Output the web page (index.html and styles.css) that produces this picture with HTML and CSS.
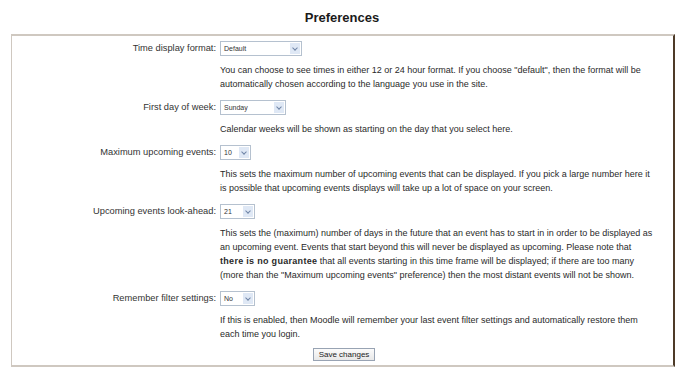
FILE: index.html
```html
<!DOCTYPE html>
<html>
<head>
<meta charset="utf-8">
<link rel="stylesheet" href="styles.css">
</head>
<body>
<h2 class="title">Preferences</h2>
<form class="box">
  <div class="row">
    <div class="label">Time display format:</div>
    <div class="field">
      <div class="select w80"><span>Default</span><i class="arrow"></i></div>
      <div class="desc">You can choose to see times in either 12 or 24 hour format. If you choose "default", then the format will be<br>automatically chosen according to the language you use in the site.</div>
    </div>
  </div>
  <div class="row">
    <div class="label">First day of week:</div>
    <div class="field">
      <div class="select w64"><span>Sunday</span><i class="arrow"></i></div>
      <div class="desc">Calendar weeks will be shown as starting on the day that you select here.</div>
    </div>
  </div>
  <div class="row">
    <div class="label">Maximum upcoming events:</div>
    <div class="field">
      <div class="select w29"><span>10</span><i class="arrow"></i></div>
      <div class="desc">This sets the maximum number of upcoming events that can be displayed. If you pick a large number here it<br>is possible that upcoming events displays will take up a lot of space on your screen.</div>
    </div>
  </div>
  <div class="row">
    <div class="label">Upcoming events look-ahead:</div>
    <div class="field">
      <div class="select w33"><span>21</span><i class="arrow"></i></div>
      <div class="desc">This sets the (maximum) number of days in the future that an event has to start in in order to be displayed as<br>an upcoming event. Events that start beyond this will never be displayed as upcoming. Please note that<br><b>there is no guarantee</b> that all events starting in this time frame will be displayed; if there are too many<br>(more than the "Maximum upcoming events" preference) then the most distant events will not be shown.</div>
    </div>
  </div>
  <div class="row">
    <div class="label">Remember filter settings:</div>
    <div class="field">
      <div class="select w33"><span>No</span><i class="arrow"></i></div>
      <div class="desc">If this is enabled, then Moodle will remember your last event filter settings and automatically restore them<br>each time you login.</div>
    </div>
  </div>
  <div class="actions">
    <button type="button" class="btn">Save changes</button>
  </div>
</form>
</body>
</html>
```
FILE: styles.css
```css
html, body {
  margin: 0;
  padding: 0;
  background: #fff;
}
body {
  font-family: "Liberation Sans", Arial, sans-serif;
  color: #2a2a2a;
  font-size: 9px;
}
.title {
  margin: 0;
  padding-top: 10px;
  height: 24px;
  line-height: 15px;
  font-size: 13px;
  font-weight: bold;
  text-align: center;
  color: #1a1a1a;
}
.box {
  margin: 0 9px 0 11px;
  border: 1px solid #cfc8c0;
  border-top-width: 2px;
  border-right: 2px solid #4d3a28;
  border-bottom-width: 2px;
  padding: 5px 0 4px;
  display: flex;
  flex-direction: column;
  gap: 9px;
}
.row {
  display: grid;
  grid-template-columns: 204px 1fr;
  column-gap: 4px;
}
.label {
  text-align: right;
  height: 15px;
  line-height: 15px;
  color: #333;
  font-size: 9.3px;
}
.field {
  padding-right: 4px;
}
.select {
  height: 13px;
  border: 1px solid #b5c1cf;
  background: #fff;
  display: flex;
  align-items: center;
  justify-content: space-between;
  padding: 0 1px 0 3px;
  font-size: 7px;
  color: #333;
}
.w80 { width: 76px; }
.w64 { width: 60px; }
.w29 { width: 25px; }
.w33 { width: 29px; }
.arrow {
  width: 10px;
  height: 11px;
  background: #dfe8f5;
  position: relative;
}
.arrow::after {
  content: "";
  position: absolute;
  left: 3px;
  top: 3px;
  width: 3px;
  height: 3px;
  border-right: 1px solid #6f84a6;
  border-bottom: 1px solid #6f84a6;
  transform: rotate(45deg);
}
.desc {
  margin-top: 7px;
  line-height: 14px;
  color: #2a2a2a;
  white-space: nowrap;
}
.desc b {
  letter-spacing: 0.3px;
}
.actions {
  display: flex;
  justify-content: center;
  margin-top: -2px;
}
.btn {
  font-family: "Liberation Sans", Arial, sans-serif;
  font-size: 8px;
  height: 13px;
  padding: 0 5px;
  line-height: 11px;
  border: 1px solid #98a3b3;
  background: linear-gradient(#fbfbfb, #e8e8e8);
  color: #222;
  margin-left: 3px;
}
```
